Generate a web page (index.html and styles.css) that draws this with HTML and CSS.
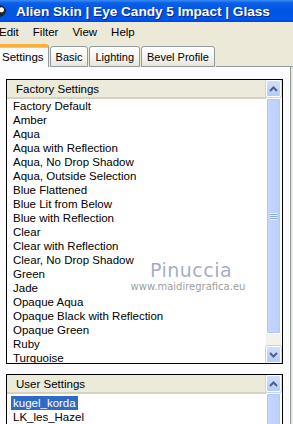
FILE: index.html
```html
<!DOCTYPE html>
<html lang="en">
<head>
    <meta charset="UTF-8">
    <meta name="viewport" content="width=device-width, initial-scale=1.0">
    <title>Alien Skin | Eye Candy 5 Impact | Glass</title>
    <link rel="stylesheet" href="styles.css">
</head>
<body>
    <div class="window">
        <div class="titlebar">
            <span class="app-icon"></span>
            <span class="title">Alien Skin | Eye Candy 5 Impact | Glass</span>
        </div>

        <div class="menubar">
            <span class="menu-item first">Edit</span>
            <span class="menu-item">Filter</span>
            <span class="menu-item">View</span>
            <span class="menu-item">Help</span>
        </div>

        <div class="tabstrip">
            <div class="tab active">Settings</div>
            <div class="tab">Basic</div>
            <div class="tab">Lighting</div>
            <div class="tab">Bevel Profile</div>
            <div class="tab-rest"></div>
        </div>

        <div class="panel">
            <!-- Factory settings list -->
            <div class="listbox factory">
                <div class="list-main">
                    <div class="list-header">Factory Settings</div>
                    <ul class="list-items">
                        <li>Factory Default</li>
                        <li>Amber</li>
                        <li>Aqua</li>
                        <li>Aqua with Reflection</li>
                        <li>Aqua, No Drop Shadow</li>
                        <li>Aqua, Outside Selection</li>
                        <li>Blue Flattened</li>
                        <li>Blue Lit from Below</li>
                        <li>Blue with Reflection</li>
                        <li>Clear</li>
                        <li>Clear with Reflection</li>
                        <li>Clear, No Drop Shadow</li>
                        <li>Green</li>
                        <li>Jade</li>
                        <li>Opaque Aqua</li>
                        <li>Opaque Black with Reflection</li>
                        <li>Opaque Green</li>
                        <li>Ruby</li>
                        <li>Turquoise</li>
                    </ul>
                </div>
                <div class="scrollbar">
                    <div class="sb-btn">
                        <svg width="9" height="6" viewBox="0 0 9 6"><path d="M1 5 L4.5 1.5 L8 5" fill="none" stroke="#4d6185" stroke-width="2"/></svg>
                    </div>
                    <div class="sb-thumb tall">
                        <span class="grip"></span>
                    </div>
                    <div class="sb-track"></div>
                    <div class="sb-btn">
                        <svg width="9" height="6" viewBox="0 0 9 6"><path d="M1 1 L4.5 4.5 L8 1" fill="none" stroke="#4d6185" stroke-width="2"/></svg>
                    </div>
                </div>
            </div>

            <!-- User settings list -->
            <div class="listbox user">
                <div class="list-main">
                    <div class="list-header">User Settings</div>
                    <ul class="list-items">
                        <li><span class="selected">kugel_korda</span></li>
                        <li>LK_les_Hazel</li>
                    </ul>
                </div>
                <div class="scrollbar">
                    <div class="sb-btn">
                        <svg width="9" height="6" viewBox="0 0 9 6"><path d="M1 5 L4.5 1.5 L8 5" fill="none" stroke="#4d6185" stroke-width="2"/></svg>
                    </div>
                    <div class="sb-thumb"></div>
                </div>
            </div>

            <div class="watermark">
                <div class="wm-name">Pinuccia</div>
                <div class="wm-url">www.maidiregrafica.eu</div>
            </div>
        </div>
    </div>
</body>
</html>
```

FILE: styles.css
```css
* {
    margin: 0;
    padding: 0;
    box-sizing: border-box;
}

body {
    font-family: 'Liberation Sans', Arial, sans-serif;
    font-size: 11.5px;
    color: #000;
    background: #ece9d8;
    width: 293px;
    height: 424px;
    overflow: hidden;
}

.window {
    width: 293px;
    height: 424px;
    overflow: hidden;
}

/* title bar */
.titlebar {
    height: 22px;
    display: flex;
    align-items: center;
    background: linear-gradient(#3b8cf5 0, #0a5fe8 3px, #0054e3 50%, #0058ec 88%, #0043d6 100%);
    color: white;
}

.app-icon {
    width: 15px;
    height: 12px;
    margin-left: -9px;
    margin-right: 10px;
    border-radius: 50%;
    background: radial-gradient(circle at 70% 40%, #fff 0 2px, #222 3px);
}

.title {
    font-weight: bold;
    font-size: 13.6px;
    text-shadow: 1px 1px 0 #0a2a8a;
}

/* menu */
.menubar {
    height: 20px;
    display: flex;
    align-items: center;
    gap: 14px;
    background: #ece9d8;
}

.menu-item.first {
    margin-left: -1px;
}

/* tabs */
.tabstrip {
    height: 25px;
    display: flex;
    align-items: flex-end;
    background: #ece9d8;
    font-size: 11px;
}

.tab {
    height: 21px;
    padding: 0 5px;
    margin-right: 1px;
    display: flex;
    align-items: center;
    border: 1px solid #919b9c;
    border-radius: 3px 3px 0 0;
    background: linear-gradient(#ffffff, #f4f3ee 60%, #e7e5db);
}

.tab.active {
    height: 23px;
    margin-left: -3px;
    padding: 0 4px 1px 4px;
    border-top: 3px solid #f7b13a;
    border-bottom: none;
    background: #fcfcfe;
    box-shadow: inset 0 1px 0 #ffc73c;
    font-size: 11.5px;
}

.tab-rest {
    flex: 1;
    align-self: stretch;
    border-bottom: 1px solid #919b9c;
}

/* panel */
.panel {
    position: relative;
    width: 291px;
    height: 358px;
    padding: 12px 0 0 6px;
    background: #fcfcfe;
    border-right: 1px solid #919b9c;
}

.listbox {
    width: 277px;
    border: 1px solid #000;
    background: white;
    display: flex;
    overflow: hidden;
}

.listbox.factory {
    height: 285px;
}

.listbox.user {
    margin-top: 10px;
    height: 60px;
}

.list-main {
    flex: 1;
    min-width: 0;
    overflow: hidden;
}

.list-header {
    height: 19px;
    padding-left: 9px;
    display: flex;
    align-items: center;
    background: #ebeadb;
    border-bottom: 2px solid #d6d2c2;
}

.list-items {
    list-style: none;
}

.list-items li {
    height: 14px;
    line-height: 14px;
    padding-left: 6px;
    white-space: nowrap;
}

.list-items .selected {
    display: inline-block;
    background: #316ac5;
    color: white;
    margin-left: -2px;
    padding: 0 2px;
}

.user .list-items {
    padding-top: 2px;
}

/* scrollbar */
.scrollbar {
    width: 15px;
    margin-right: 1px;
    display: flex;
    flex-direction: column;
    background: #f3f1ec;
}

.sb-btn {
    height: 17px;
    display: flex;
    align-items: center;
    justify-content: center;
    border: 1px solid #fff;
    border-radius: 2px;
    background: linear-gradient(#d2defc, #b6cafa);
    box-shadow: 0 0 0 1px #c3d3fd;
}

.sb-thumb {
    flex: 1;
    margin-top: 1px;
    border: 1px solid #fff;
    border-radius: 2px;
    background: linear-gradient(90deg, #c6d6fd, #bccffb);
    box-shadow: inset 0 0 0 1px #b4c8f6;
}

.sb-thumb.tall {
    flex: none;
    height: 236px;
    display: flex;
    align-items: center;
    justify-content: center;
}

.grip {
    width: 7px;
    height: 7px;
    background: repeating-linear-gradient(#eef3fe 0 1px, #8da7e5 1px 2px);
}

.sb-track {
    flex: 1;
}

/* watermark */
.watermark {
    position: absolute;
    left: 125px;
    top: 193px;
    width: 126px;
    text-align: center;
    pointer-events: none;
}

.wm-name {
    font-family: 'DejaVu Sans', sans-serif;
    font-size: 19px;
    line-height: 21px;
    padding-left: 6px;
    color: rgba(125, 135, 170, 0.7);
    letter-spacing: 0.5px;
}

.wm-url {
    font-family: 'DejaVu Sans', sans-serif;
    font-size: 10px;
    line-height: 11px;
    color: rgba(110, 110, 110, 0.7);
}
```
